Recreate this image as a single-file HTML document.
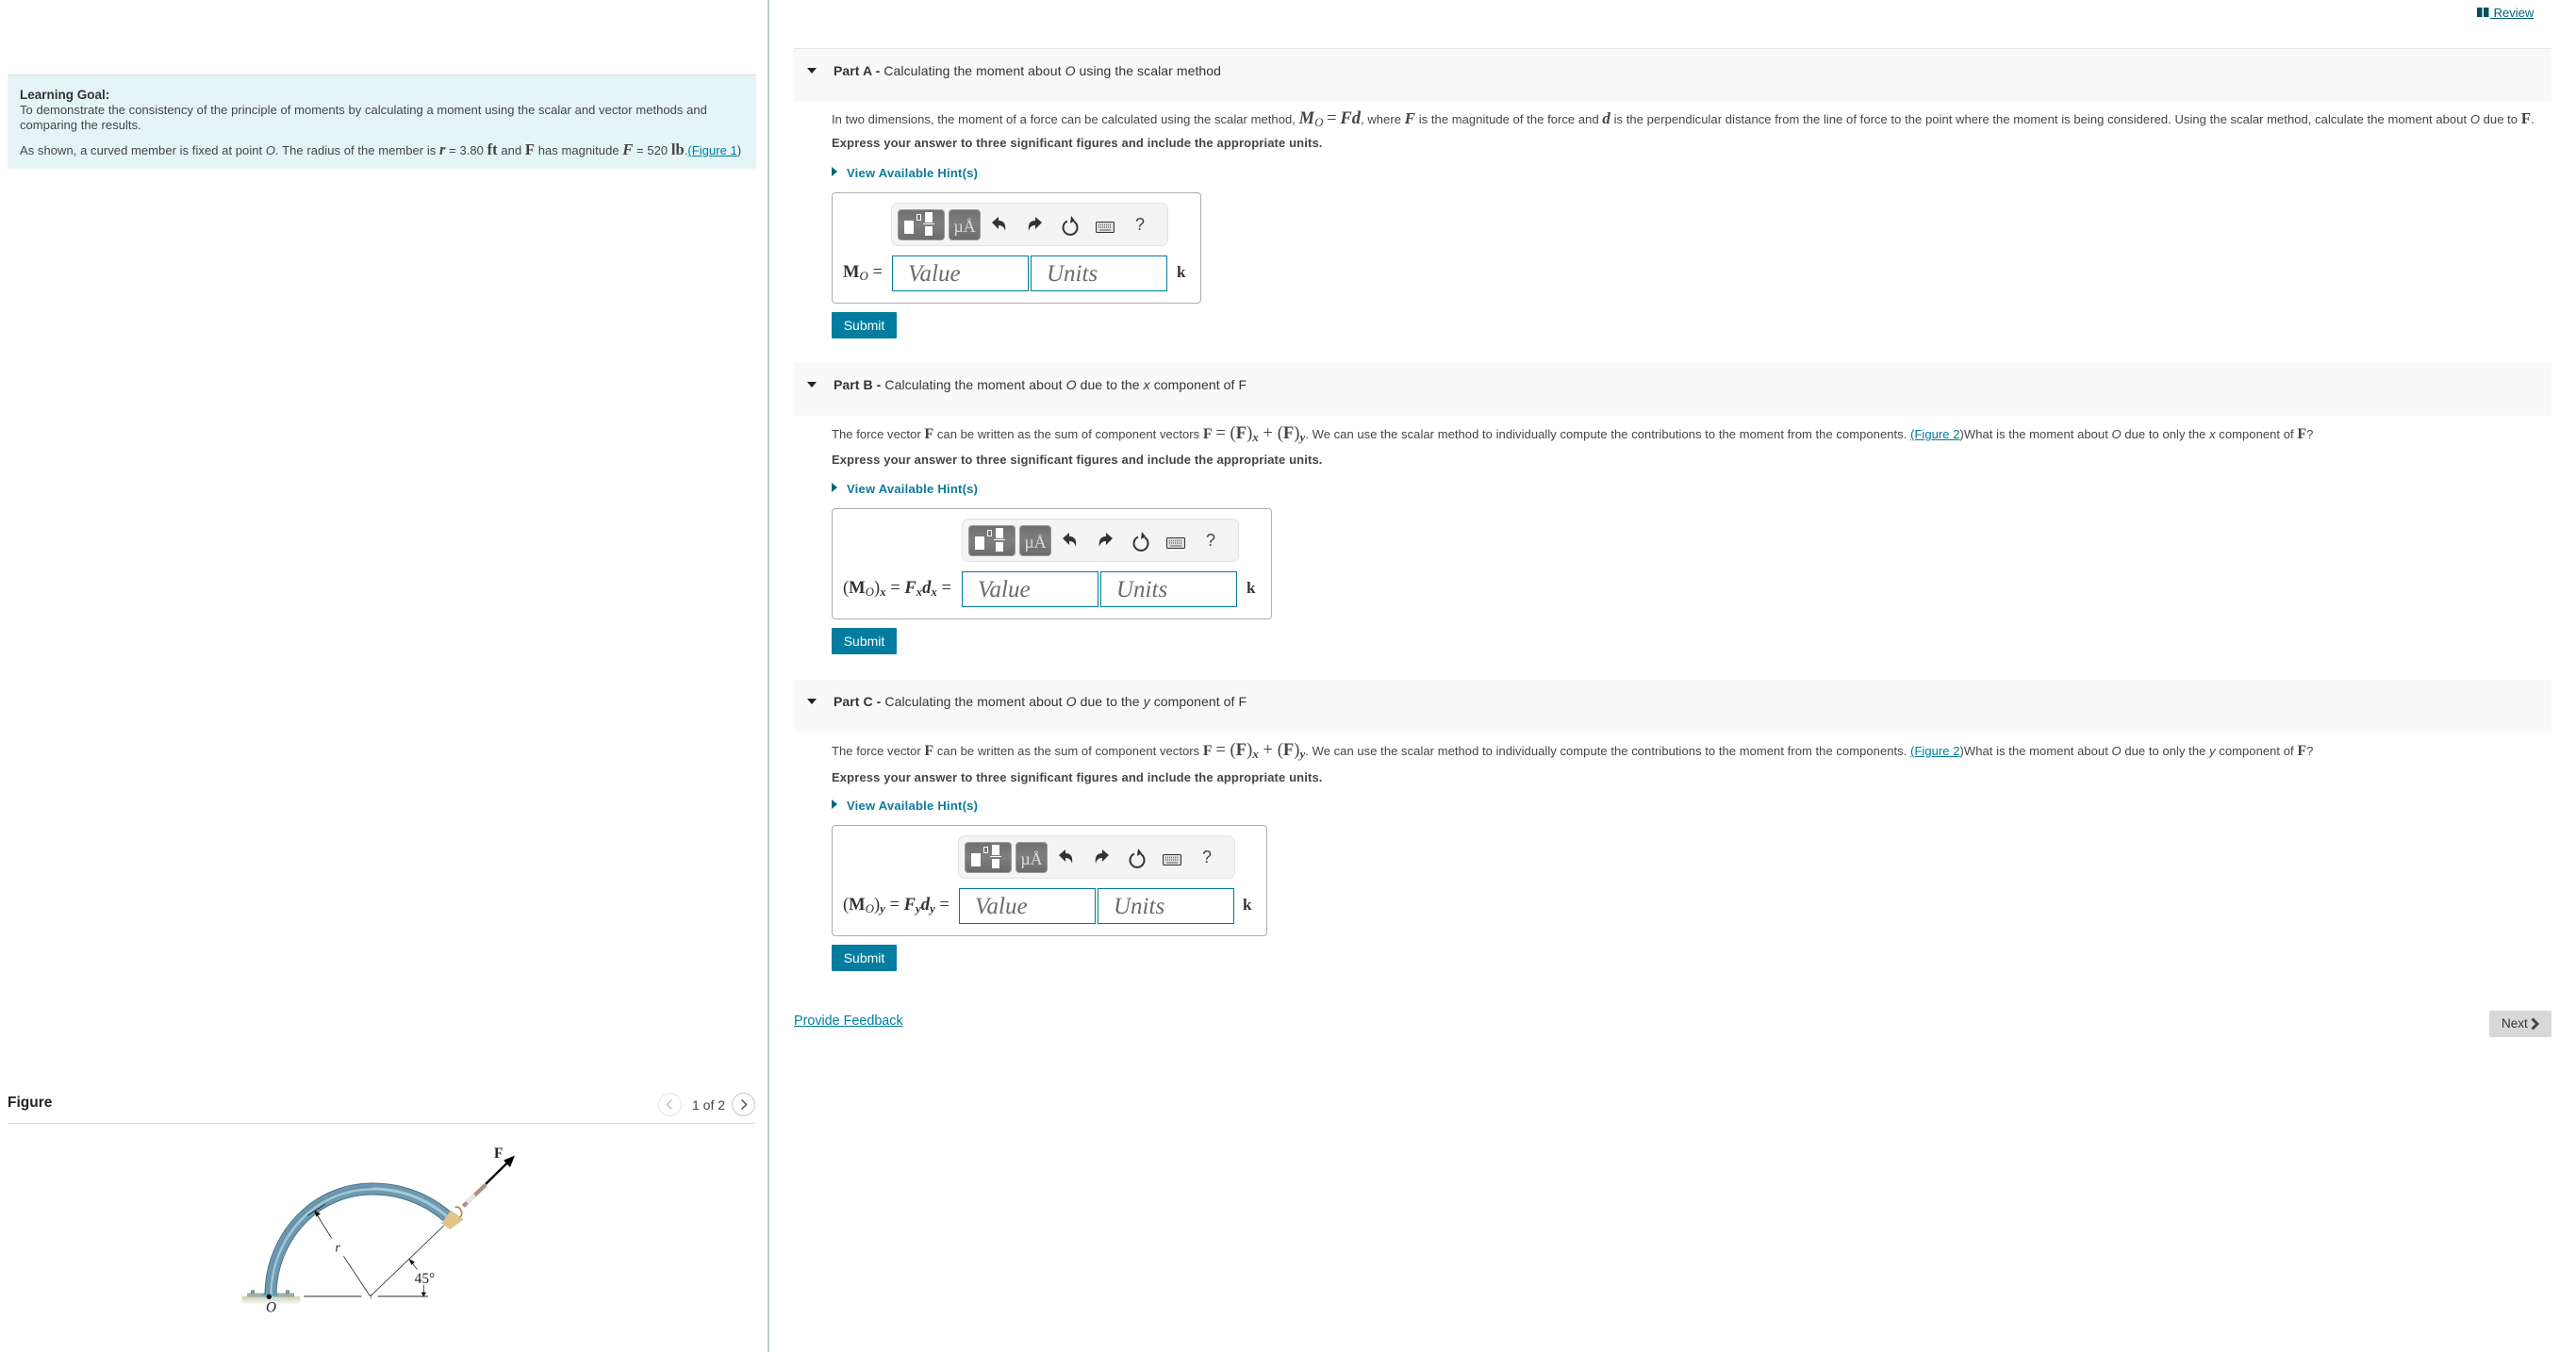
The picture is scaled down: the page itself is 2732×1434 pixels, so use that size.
<!DOCTYPE html>
<html><head><meta charset="utf-8"><title>Part</title>
<style>
html,body{margin:0;padding:0;background:#fff;width:2732px;height:1434px;overflow:hidden}
body{position:relative;font-family:"Liberation Sans",Arial,sans-serif;font-size:13px;color:#333}
.a{position:absolute}
.t{position:absolute;white-space:nowrap;height:20px;line-height:20px}
.m{font-family:"Liberation Serif",serif}
.b{font-weight:bold}.i{font-style:italic}
a{color:#007c9b;text-decoration:underline}
sub{font-size:.7em;line-height:0;vertical-align:-.25em}
.hd{position:absolute;left:842px;width:1864px;height:56px;background:#f9f9f9}
.title{font-size:14px;color:#333;left:884px;letter-spacing:.08px}
.tri{position:absolute;left:856px;width:0;height:0;border-left:5.5px solid transparent;border-right:5.5px solid transparent;border-top:6px solid #222}
.p{left:882px;font-size:13px;color:#444;letter-spacing:.05px}
.ex{left:882px;font-size:13px;font-weight:bold;color:#444;letter-spacing:.127px}
.hint{left:898px;font-size:13px;font-weight:bold;color:#0a7a9b;letter-spacing:.24px}
.htri{position:absolute;left:882px;width:0;height:0;border-top:5px solid transparent;border-bottom:5px solid transparent;border-left:6px solid #00637f}
.box{position:absolute;left:882px;height:116px;border:1px solid #adadad;border-radius:4px;box-sizing:content-box}
.tb{position:absolute;width:294px;height:46px;background:#f4f4f4;border:1px solid #e2e2e2;border-radius:7px;box-sizing:border-box}
.b1,.b2{position:absolute;top:6px;height:33px;background:linear-gradient(#707070,#7e7e7e 50%,#6c6c6c);border:1px solid #9a9a9a;border-radius:4px;box-sizing:border-box}
.b1{left:6px;width:50px}.b2{left:60px;width:34px;color:#ddd;font:18px/34px "Liberation Serif",serif;text-align:center}
.b1 i{position:absolute;background:#fff;display:block}
.ic{position:absolute;top:2px;left:-1px}
.q{position:absolute;left:258px;top:11px;font-size:18px;line-height:22px;color:#444}
.in{position:absolute;width:145px;height:38px;border:1px solid #007c9b;box-sizing:border-box;font:italic 25px/37px "Liberation Serif",serif;color:#6b6b6b;padding-left:16px}
.lab{font-family:"Liberation Serif",serif;font-size:18.5px;color:#333}
.k{font:bold 17px "Liberation Serif",serif;color:#333;line-height:20px}
.sub{position:absolute;left:882px;width:69px;height:28px;background:#047c9f;color:#fff;font-size:14px;line-height:28px;text-align:center;border-radius:1px}
.mt{font-family:"Liberation Serif",serif;font-size:18.5px}
</style></head><body>

<!-- left column -->
<div class="a" style="left:814px;top:0;width:2px;height:1434px;background:#bccde0"></div>
<div class="a" style="left:8px;top:79px;width:794px;height:100px;background:#e5f5f6;border-top:1px solid #d5e0e5;box-sizing:border-box"></div>
<div class="t b" style="left:21px;top:91px;font-size:13.5px;color:#333">Learning Goal:</div>
<div class="t" style="left:21px;top:107px;font-size:13px;color:#444;letter-spacing:.04px">To demonstrate the consistency of the principle of moments by calculating a moment using the scalar and vector methods and</div>
<div class="t" style="left:21px;top:123px;font-size:13px;color:#444;letter-spacing:.04px">comparing the results.</div>
<div class="t" style="left:21px;top:149px;font-size:13px;color:#444;letter-spacing:.05px">As shown, a curved member is fixed at point <span class="i">O</span>. The radius of the member is <span class="m i b" style="font-size:16.5px">r</span> = 3.80 <span class="m b" style="font-size:16.5px">ft</span> and <span class="m b" style="font-size:16.5px">F</span> has magnitude <span class="m i b" style="font-size:16.5px">F</span> = 520 <span class="m b" style="font-size:16.5px">lb</span>.<a href="#">(Figure 1</a>)</div>

<div class="t b" style="left:8px;top:1160px;font-size:15.5px;color:#222">Figure</div>
<div class="a" style="left:8px;top:1191px;width:793px;height:1px;background:#ddd"></div>
<div class="a" style="left:698px;top:1159px;width:25px;height:25px;border:1px solid #e5e5e5;border-radius:50%;box-sizing:border-box"></div>
<svg class="a" style="left:698px;top:1159px" width="25" height="25"><path d="M14.5 7.5L9.5 12.5l5 5" fill="none" stroke="#c4c4c4" stroke-width="1.5"/></svg>
<div class="t" style="left:734px;top:1162px;font-size:14px;color:#444">1 of 2</div>
<div class="a" style="left:776px;top:1159px;width:25px;height:25px;border:1px solid #c8c8c8;border-radius:50%;box-sizing:border-box"></div>
<svg class="a" style="left:776px;top:1159px" width="25" height="25"><path d="M10.5 7.5l5 5-5 5" fill="none" stroke="#555" stroke-width="1.5"/></svg>

<!-- figure -->
<svg class="a" style="left:250px;top:1210px" width="320" height="200" viewBox="0 0 960 600">
<defs><linearGradient id="g" x1="0" y1="0" x2="0" y2="1"><stop offset="0" stop-color="#cfcfb4"/><stop offset="1" stop-color="#fff"/></linearGradient></defs>
<rect x="20" y="495" width="185" height="28" fill="url(#g)"/>
<rect x="38" y="486" width="147" height="9" fill="#a5bcb5" stroke="#667" stroke-width="1.5"/>
<rect x="49" y="476" width="10" height="10" fill="#7fa4b4" stroke="#567" stroke-width="1.5"/>
<rect x="160" y="476" width="10" height="10" fill="#7fa4b4" stroke="#567" stroke-width="1.5"/>
<rect x="84" y="488" width="50" height="8" fill="#5fb4da"/>
<path id="arc" d="M111 490C112 310 250 153 435 153C535 153 612 190 672 240" fill="none" stroke="#41667e" stroke-width="39"/>
<path d="M111 490C112 310 250 153 435 153C535 153 612 190 672 240" fill="none" stroke="#6d9ab2" stroke-width="34"/>
<path d="M111 490C112 310 250 153 435 153C535 153 612 190 672 240" fill="none" stroke="#a9c9d6" stroke-width="9"/>
<path d="M106 490C108 305 246 148 435 148" fill="none" stroke="#5a88a2" stroke-width="8" opacity=".5"/>
<path d="M724 208L795 140" stroke="#ad8f88" stroke-width="13"/>
<path d="M735 196L760 172" stroke="#e8e8e8" stroke-width="14"/>
<path d="M698 212C712 205 722 225 718 238L702 256" fill="none" stroke="#a88a50" stroke-width="5"/>
<path d="M655 262L684 222L724 250L682 281Z" fill="#e3c488" stroke="#a98" stroke-width="1"/>
<path d="M795 138L866 68" stroke="#000" stroke-width="7"/>
<path d="M888 47L852 62L873 84Z" fill="#000"/>
<path d="M428 495L662 270M428 495L343 367M305 310L252 225" stroke="#111" stroke-width="2.2" fill="none"/>
<path d="M228 238L285 202" stroke="#111" stroke-width="2"/>
<path d="M249 221L270 232L256 242Z" fill="#111"/>
<path d="M217 495H400M452 495H612" stroke="#555" stroke-width="3.500"/>
<path d="M430 488V505" stroke="#666" stroke-width="2"/>
<path d="M578 410L552 378" stroke="#111" stroke-width="2"/>
<path d="M551 375L570 386L559 395Z" fill="#111"/>
<path d="M598 458V495" stroke="#111" stroke-width="2"/>
<path d="M598 497L590 482H606Z" fill="#111"/>
<circle cx="106" cy="496" r="8" fill="#111"/>
<text x="822" y="54" font-family="Liberation Serif" font-weight="bold" font-size="46" fill="#222">F</text>
<text x="316" y="352" font-family="Liberation Serif" font-style="italic" font-size="42" fill="#222">r</text>
<text x="96" y="544" font-family="Liberation Serif" font-style="italic" font-size="46" fill="#222">O</text>
<text x="569" y="453" font-family="Liberation Serif" font-size="46" fill="#222">45°</text>
</svg>

<!-- review -->
<svg class="a" style="left:2627px;top:8px" width="13" height="11"><rect x="0" y="0" width="5.5" height="10" fill="#00505f"/><rect x="7" y="0" width="5.5" height="10" fill="#00505f"/></svg>
<div class="t" style="left:2641px;top:4px;font-size:13px"><a href="#" style="color:#00607c">&nbsp;Review</a></div>

<!-- Part A -->
<div class="hd" style="top:51px;height:57px;border-top:1px solid #e4e4e4;box-sizing:border-box"></div>
<div class="tri" style="top:72px"></div>
<div class="t title" style="top:65px"><b>Part A - </b>Calculating the moment about <i>O</i> using the scalar method</div>
<div class="t p" style="top:116px">In two dimensions, the moment of a force can be calculated using the scalar method, <span class="mt i"><b>M</b><sub>O</sub></span> <span class="mt">=</span> <span class="mt i b">Fd</span>, where <span class="m i b" style="font-size:17px">F</span> is the magnitude of the force and <span class="m i b" style="font-size:17px">d</span> is the perpendicular distance from the line of force to the point where the moment is being considered. Using the scalar method, calculate the moment about <i>O</i> due to <span class="m b" style="font-size:17px">F</span>.</div>
<div class="t ex" style="top:142px">Express your answer to three significant figures and include the appropriate units.</div>
<div class="htri" style="top:177px"></div>
<div class="t hint" style="top:174px">View Available Hint(s)</div>
<div class="box" style="top:204px;width:390px"></div>
<div class="tb" style="left:945px;top:215px">
 <div class="b1"><i style="left:6px;top:11px;width:10px;height:14px"></i><i style="left:19px;top:4px;width:3px;height:5px;background:none;border:1px solid #fff"></i><i style="left:28px;top:2px;width:8px;height:11px"></i><i style="left:26px;top:14px;width:12px;height:1px"></i><i style="left:28px;top:17px;width:8px;height:10px"></i></div>
 <div class="b2">µÅ</div>
 <svg class="ic" width="294" height="46"><path d="M107 18l7-6v4c6 0 8 4 7 11-1-4-3-6-7-6v4z" fill="#333"/><path d="M160 18l-7-6v4c-6 0-8 4-7 11 1-4 3-6 7-6v4z" fill="#333"/><path d="M194 17a7.5 7.5 0 1 1-7-.5" fill="none" stroke="#333" stroke-width="2"/><path d="M191 11l-1 8 5-3z" fill="#333"/><rect x="217.5" y="17.500" width="19" height="11" rx="1" fill="#ddd" stroke="#333" stroke-width="1"/><path d="M220 20.500h14M220 23h14" stroke="#777" stroke-width="1.500" stroke-dasharray="1 1"/><path d="M221 26h12" stroke="#666" stroke-width="1"/></svg>
 <div class="q">?</div>
</div>
<div class="t lab" style="left:894px;top:279px"><b>M</b><sub class="i">O</sub> =</div>
<div class="in" style="left:946px;top:271px">Value</div>
<div class="in" style="left:1093px;top:271px">Units</div>
<div class="t k" style="left:1248px;top:279px">k</div>
<div class="sub" style="top:331px">Submit</div>

<!-- Part B -->
<div class="hd" style="top:385px"></div>
<div class="tri" style="top:405px"></div>
<div class="t title" style="top:398px"><b>Part B - </b>Calculating the moment about <i>O</i> due to the <i>x</i> component of F</div>
<div class="t p" style="top:450px">The force vector <span class="m b" style="font-size:16px">F</span> can be written as the sum of component vectors <span class="m b" style="font-size:16px">F</span> <span class="mt">= (<b>F</b>)<sub class="i b">x</sub> + (<b>F</b>)<sub class="i b">y</sub></span>. We can use the scalar method to individually compute the contributions to the moment from the components. <a href="#">(Figure 2</a>)What is the moment about <i>O</i> due to only the <i>x</i> component of <span class="m b" style="font-size:16px">F</span>?</div>
<div class="t ex" style="top:478px">Express your answer to three significant figures and include the appropriate units.</div>
<div class="htri" style="top:512px"></div>
<div class="t hint" style="top:509px">View Available Hint(s)</div>
<div class="box" style="top:539px;width:465px"></div>
<div class="tb" style="left:1020px;top:550px">
 <div class="b1"><i style="left:6px;top:11px;width:10px;height:14px"></i><i style="left:19px;top:4px;width:3px;height:5px;background:none;border:1px solid #fff"></i><i style="left:28px;top:2px;width:8px;height:11px"></i><i style="left:26px;top:14px;width:12px;height:1px"></i><i style="left:28px;top:17px;width:8px;height:10px"></i></div>
 <div class="b2">µÅ</div>
 <svg class="ic" width="294" height="46"><path d="M107 18l7-6v4c6 0 8 4 7 11-1-4-3-6-7-6v4z" fill="#333"/><path d="M160 18l-7-6v4c-6 0-8 4-7 11 1-4 3-6 7-6v4z" fill="#333"/><path d="M194 17a7.5 7.5 0 1 1-7-.5" fill="none" stroke="#333" stroke-width="2"/><path d="M191 11l-1 8 5-3z" fill="#333"/><rect x="217.5" y="17.500" width="19" height="11" rx="1" fill="#ddd" stroke="#333" stroke-width="1"/><path d="M220 20.500h14M220 23h14" stroke="#777" stroke-width="1.500" stroke-dasharray="1 1"/><path d="M221 26h12" stroke="#666" stroke-width="1"/></svg>
 <div class="q">?</div>
</div>
<div class="t lab" style="left:894px;top:614px">(<b>M</b><sub class="i">O</sub>)<sub class="i b">x</sub> = <i><b>F</b></i><sub class="i b">x</sub><i><b>d</b></i><sub class="i b">x</sub> =</div>
<div class="in" style="left:1020px;top:606px">Value</div>
<div class="in" style="left:1167px;top:606px">Units</div>
<div class="t k" style="left:1322px;top:614px">k</div>
<div class="sub" style="top:666px">Submit</div>

<!-- Part C -->
<div class="hd" style="top:721px"></div>
<div class="tri" style="top:741px"></div>
<div class="t title" style="top:734px"><b>Part C - </b>Calculating the moment about <i>O</i> due to the <i>y</i> component of F</div>
<div class="t p" style="top:786px">The force vector <span class="m b" style="font-size:16px">F</span> can be written as the sum of component vectors <span class="m b" style="font-size:16px">F</span> <span class="mt">= (<b>F</b>)<sub class="i b">x</sub> + (<b>F</b>)<sub class="i b">y</sub></span>. We can use the scalar method to individually compute the contributions to the moment from the components. <a href="#">(Figure 2</a>)What is the moment about <i>O</i> due to only the <i>y</i> component of <span class="m b" style="font-size:16px">F</span>?</div>
<div class="t ex" style="top:815px">Express your answer to three significant figures and include the appropriate units.</div>
<div class="htri" style="top:848px"></div>
<div class="t hint" style="top:845px">View Available Hint(s)</div>
<div class="box" style="top:875px;width:460px"></div>
<div class="tb" style="left:1016px;top:886px">
 <div class="b1"><i style="left:6px;top:11px;width:10px;height:14px"></i><i style="left:19px;top:4px;width:3px;height:5px;background:none;border:1px solid #fff"></i><i style="left:28px;top:2px;width:8px;height:11px"></i><i style="left:26px;top:14px;width:12px;height:1px"></i><i style="left:28px;top:17px;width:8px;height:10px"></i></div>
 <div class="b2">µÅ</div>
 <svg class="ic" width="294" height="46"><path d="M107 18l7-6v4c6 0 8 4 7 11-1-4-3-6-7-6v4z" fill="#333"/><path d="M160 18l-7-6v4c-6 0-8 4-7 11 1-4 3-6 7-6v4z" fill="#333"/><path d="M194 17a7.5 7.5 0 1 1-7-.5" fill="none" stroke="#333" stroke-width="2"/><path d="M191 11l-1 8 5-3z" fill="#333"/><rect x="217.5" y="17.500" width="19" height="11" rx="1" fill="#ddd" stroke="#333" stroke-width="1"/><path d="M220 20.500h14M220 23h14" stroke="#777" stroke-width="1.500" stroke-dasharray="1 1"/><path d="M221 26h12" stroke="#666" stroke-width="1"/></svg>
 <div class="q">?</div>
</div>
<div class="t lab" style="left:894px;top:950px">(<b>M</b><sub class="i">O</sub>)<sub class="i b">y</sub> = <i><b>F</b></i><sub class="i b">y</sub><i><b>d</b></i><sub class="i b">y</sub> =</div>
<div class="in" style="left:1017px;top:942px">Value</div>
<div class="in" style="left:1164px;top:942px">Units</div>
<div class="t k" style="left:1318px;top:950px">k</div>
<div class="sub" style="top:1002px">Submit</div>

<div class="t" style="left:842px;top:1073px;font-size:14.35px"><a href="#">Provide Feedback</a></div>
<div class="a" style="left:2640px;top:1072px;width:66px;height:28px;background:#d8d8d8;border-radius:1px"></div>
<div class="t" style="left:2653px;top:1076px;font-size:13.5px;color:#333">Next</div>
<svg class="a" style="left:2683px;top:1079px" width="12" height="14"><path d="M2.500 1.500L8 7l-5.500 5.500" fill="none" stroke="#444" stroke-width="3"/></svg>
</body></html>
